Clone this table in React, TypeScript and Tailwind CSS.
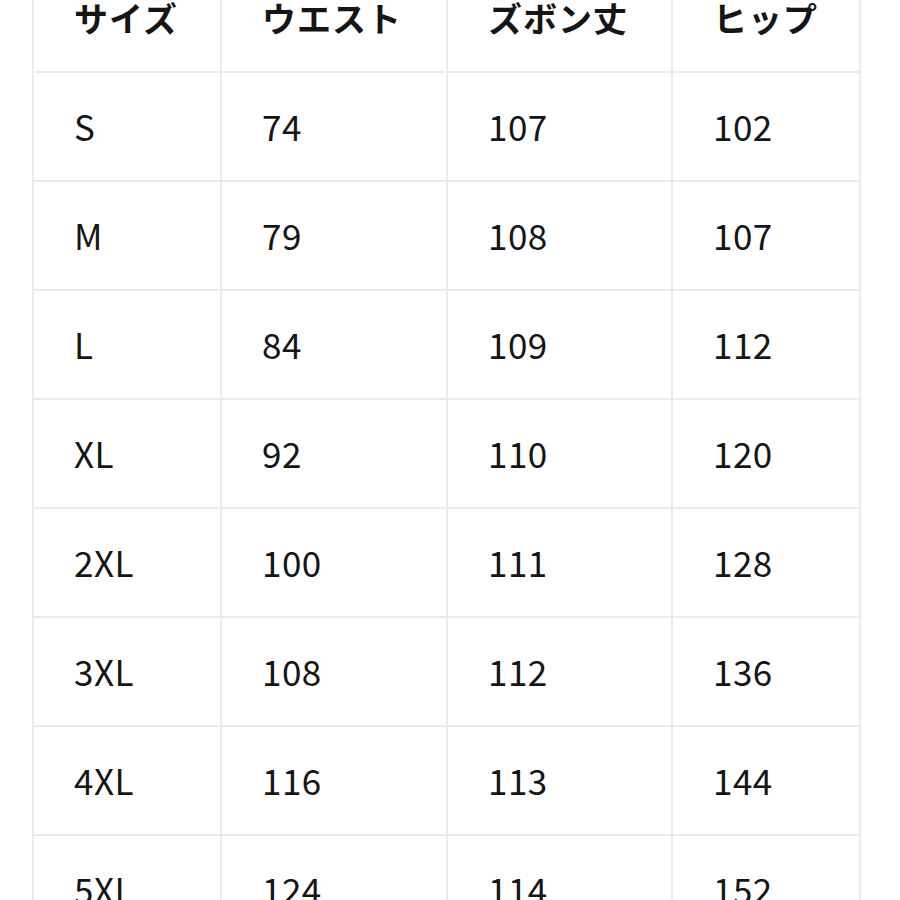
import React from 'react';

const headers = ['サイズ', 'ウエスト', 'ズボン丈', 'ヒップ'];

const rows = [
  ['S', '74', '107', '102'],
  ['M', '79', '108', '107'],
  ['L', '84', '109', '112'],
  ['XL', '92', '110', '120'],
  ['2XL', '100', '111', '128'],
  ['3XL', '108', '112', '136'],
  ['4XL', '116', '113', '144'],
  ['5XL', '124', '114', '152'],
];

export default function App() {
  return (
    <div className="h-[900px] w-[900px] overflow-hidden bg-white">
      <div
        className="ml-[32px] mt-[-38px] grid grid-cols-[188px_226px_225px_188px] border-l-2 border-t-2 border-[#ebebeb] text-[#151515]"
        style={{ fontFamily: '"Noto Sans CJK JP", "Noto Sans", sans-serif' }}
      >
        {headers.map((h) => (
          <div
            key={h}
            className="flex h-[109px] items-center border-b-2 border-r-2 border-[#ebebeb] pl-[40px] text-[34px] font-semibold tracking-[1px]"
          >
            {h}
          </div>
        ))}
        {rows.map((r) =>
          r.map((c, i) => (
            <div
              key={r[0] + i}
              className="flex h-[109px] items-center border-b-2 border-r-2 border-[#ebebeb] pl-[40px] text-[35px] tracking-[0.5px]"
            >
              {c}
            </div>
          ))
        )}
      </div>
    </div>
  );
}
